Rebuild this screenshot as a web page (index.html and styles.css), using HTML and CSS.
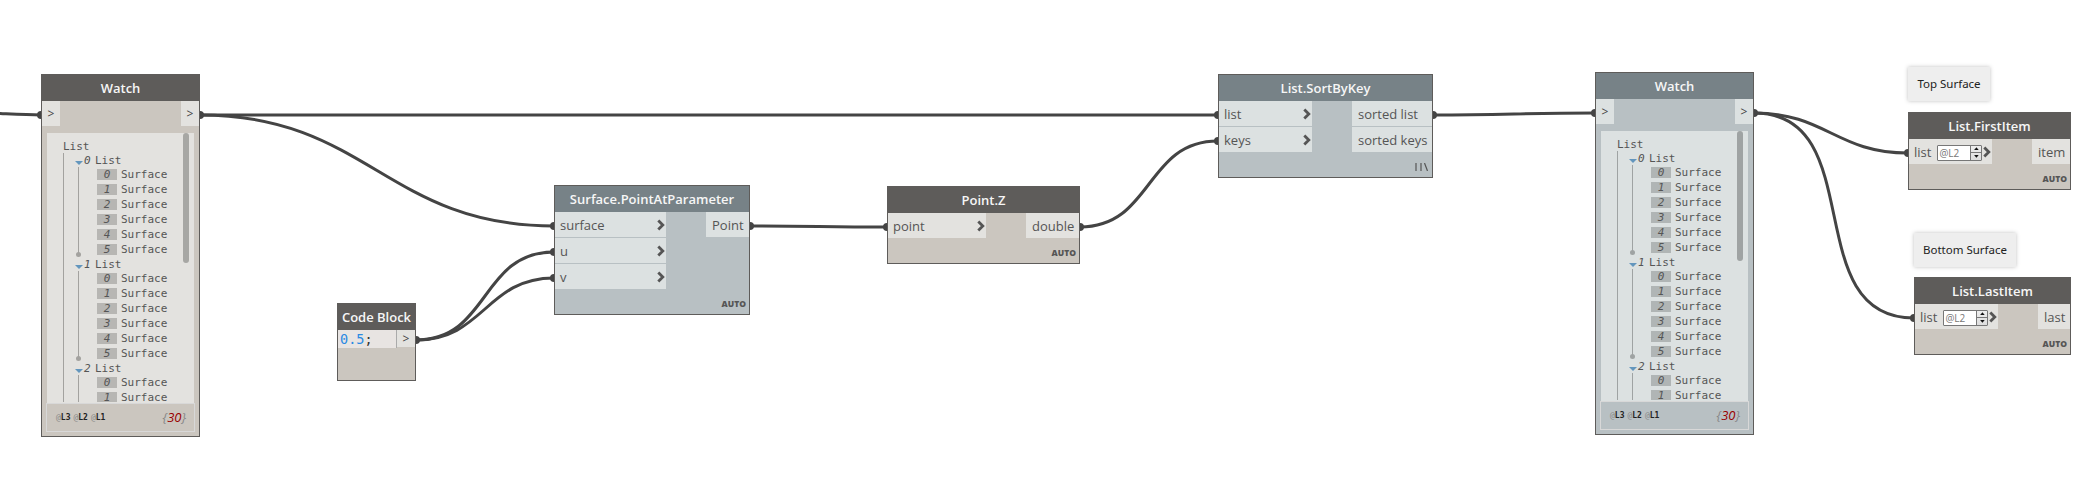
FILE: index.html
```html
<!DOCTYPE html>
<html lang="en">
<head>
<meta charset="utf-8">
<title>Node graph</title>
<link rel="stylesheet" href="styles.css">
</head>
<body>
<main class="canvas">
  <svg class="wires" width="2088" height="487" viewBox="0 0 2088 487">
    <path d="M-20 112.8C0 113.2 20 115 41 115"/>
    <path d="M200 115H1218"/>
    <path d="M200 115C367 115 387 226 554 226"/>
    <path d="M416 340C490 340 480 252 554 252"/>
    <path d="M416 340C484 340 486 278 554 278"/>
    <path d="M750 226C812 226 825 227 887 227"/>
    <path d="M1080 227C1153 227 1145 141 1218 141"/>
    <path d="M1433 115C1506 115 1522 113 1595 113"/>
    <path d="M1754 113C1826 113 1836 153 1908 153"/>
    <path d="M1754 113C1871 113 1797 318 1914 318"/>
    <g class="dots">
      <circle cx="41" cy="115" r="4"/><circle cx="200" cy="115" r="4"/>
      <circle cx="554" cy="226" r="4"/><circle cx="554" cy="252" r="4"/><circle cx="554" cy="278" r="4"/>
      <circle cx="416" cy="340" r="4"/><circle cx="750" cy="226" r="4"/><circle cx="887" cy="227" r="4"/>
      <circle cx="1080" cy="227" r="4"/><circle cx="1218" cy="115" r="4"/><circle cx="1218" cy="141" r="4"/>
      <circle cx="1433" cy="115" r="4"/><circle cx="1595" cy="113" r="4"/><circle cx="1754" cy="113" r="4"/>
      <circle cx="1908" cy="153" r="4"/><circle cx="1914" cy="318" r="4"/>
    </g>
    <defs>
      <symbol id="chev" viewBox="0 0 8 12"><path d="M1.3 1.5L5.8 6L1.3 10.5"/></symbol>
    </defs>
  </svg>

  <section class="node watch watch-a">
    <h2 class="title">Watch</h2>
    <div class="ports"><span class="port mini">&gt;</span><span class="port mini">&gt;</span></div>
    <div class="panel">
      <div class="tree">
        <div class="root">List</div>
        <div class="branch">
          <div class="group">
            <div class="head"><i class="tri"></i><em>0</em>List</div>
            <div class="items">
              <div class="item"><em>0</em>Surface</div><div class="item"><em>1</em>Surface</div><div class="item"><em>2</em>Surface</div><div class="item"><em>3</em>Surface</div><div class="item"><em>4</em>Surface</div><div class="item"><em>5</em>Surface</div>
            </div>
          </div>
          <div class="group">
            <div class="head"><i class="tri"></i><em>1</em>List</div>
            <div class="items">
              <div class="item"><em>0</em>Surface</div><div class="item"><em>1</em>Surface</div><div class="item"><em>2</em>Surface</div><div class="item"><em>3</em>Surface</div><div class="item"><em>4</em>Surface</div><div class="item"><em>5</em>Surface</div>
            </div>
          </div>
          <div class="group">
            <div class="head"><i class="tri"></i><em>2</em>List</div>
            <div class="items open">
              <div class="item"><em>0</em>Surface</div><div class="item"><em>1</em>Surface</div>
            </div>
          </div>
        </div>
      </div>
      <div class="scroll"></div>
    </div>
    <div class="summary">
      <span class="levels"><span><i>@</i>L3</span><span><i>@</i>L2</span><span><i>@</i>L1</span></span>
      <span class="count">{<b>30</b>}</span>
    </div>
  </section>

  <section class="node code-block">
    <h2 class="title">Code Block</h2>
    <div class="code-row"><code class="code"><span class="num">0.5</span>;</code><span class="port mini">&gt;</span></div>
  </section>

  <section class="node active point-at">
    <h2 class="title">Surface.PointAtParameter</h2>
    <div class="ports">
      <div class="col ins">
        <span class="port">surface<svg class="chev"><use href="#chev"/></svg></span>
        <span class="port">u<svg class="chev"><use href="#chev"/></svg></span>
        <span class="port">v<svg class="chev"><use href="#chev"/></svg></span>
      </div>
      <div class="col outs"><span class="port">Point</span></div>
    </div>
    <div class="lacing">AUTO</div>
  </section>

  <section class="node point-z">
    <h2 class="title">Point.Z</h2>
    <div class="ports">
      <div class="col ins"><span class="port">point<svg class="chev"><use href="#chev"/></svg></span></div>
      <div class="col outs"><span class="port">double</span></div>
    </div>
    <div class="lacing">AUTO</div>
  </section>

  <section class="node active sort">
    <h2 class="title">List.SortByKey</h2>
    <div class="ports">
      <div class="col ins">
        <span class="port">list<svg class="chev"><use href="#chev"/></svg></span>
        <span class="port">keys<svg class="chev"><use href="#chev"/></svg></span>
      </div>
      <div class="col outs"><span class="port">sorted list</span><span class="port">sorted keys</span></div>
    </div>
    <div class="lacing"><svg class="longest" viewBox="0 0 13 8"><path d="M1 0V8M6 0V8M9.5 0L12.5 8"/></svg></div>
  </section>

  <section class="node active watch watch-b">
    <h2 class="title">Watch</h2>
    <div class="ports"><span class="port mini">&gt;</span><span class="port mini">&gt;</span></div>
    <div class="panel">
      <div class="tree">
        <div class="root">List</div>
        <div class="branch">
          <div class="group">
            <div class="head"><i class="tri"></i><em>0</em>List</div>
            <div class="items">
              <div class="item"><em>0</em>Surface</div><div class="item"><em>1</em>Surface</div><div class="item"><em>2</em>Surface</div><div class="item"><em>3</em>Surface</div><div class="item"><em>4</em>Surface</div><div class="item"><em>5</em>Surface</div>
            </div>
          </div>
          <div class="group">
            <div class="head"><i class="tri"></i><em>1</em>List</div>
            <div class="items">
              <div class="item"><em>0</em>Surface</div><div class="item"><em>1</em>Surface</div><div class="item"><em>2</em>Surface</div><div class="item"><em>3</em>Surface</div><div class="item"><em>4</em>Surface</div><div class="item"><em>5</em>Surface</div>
            </div>
          </div>
          <div class="group">
            <div class="head"><i class="tri"></i><em>2</em>List</div>
            <div class="items open">
              <div class="item"><em>0</em>Surface</div><div class="item"><em>1</em>Surface</div>
            </div>
          </div>
        </div>
      </div>
      <div class="scroll"></div>
    </div>
    <div class="summary">
      <span class="levels"><span><i>@</i>L3</span><span><i>@</i>L2</span><span><i>@</i>L1</span></span>
      <span class="count">{<b>30</b>}</span>
    </div>
  </section>

  <div class="note note-top">Top Surface</div>
  <section class="node first-item">
    <h2 class="title">List.FirstItem</h2>
    <div class="ports">
      <div class="col ins"><span class="port">list<span class="level"><span class="value">@L2</span><span class="spin"><i class="up"></i><i class="down"></i></span></span><svg class="chev"><use href="#chev"/></svg></span></div>
      <div class="col outs"><span class="port">item</span></div>
    </div>
    <div class="lacing">AUTO</div>
  </section>

  <div class="note note-bottom">Bottom Surface</div>
  <section class="node last-item">
    <h2 class="title">List.LastItem</h2>
    <div class="ports">
      <div class="col ins"><span class="port">list<span class="level"><span class="value">@L2</span><span class="spin"><i class="up"></i><i class="down"></i></span></span><svg class="chev"><use href="#chev"/></svg></span></div>
      <div class="col outs"><span class="port">last</span></div>
    </div>
    <div class="lacing">AUTO</div>
  </section>
</main>
</body>
</html>
```
FILE: styles.css
```css
* { box-sizing: border-box; }
body { margin: 0; background: #fff; font-family: "Open Sans", sans-serif; }
.canvas { position: relative; width: 2088px; height: 487px; overflow: hidden; }
.wires { position: absolute; left: 0; top: 0; fill: none; stroke: #444; stroke-width: 3; }
.dots { fill: #444; stroke: none; }

/* nodes */
.node {
  --head: #5e5c5a; --body: #cbc6bf; --port: #e3e2df; --ink: #555; --idx: #b7b6b3; --line: #a3a29f;
  position: absolute; display: flex; flex-direction: column;
  background: var(--body); border: 1px solid #5e5c5a; color: var(--ink);
}
.node.active { --head: #778287; --body: #b8c0c3; --port: #dce1e1; --idx: #b0b5b5; --line: #9fa3a3; }
.title {
  margin: 0; height: 26px; flex: none; background: var(--head); color: #f6f6f6;
  font-size: 13px; font-weight: 600; line-height: 27px; text-align: center; white-space: nowrap;
}
.ports { display: flex; justify-content: space-between; }
.col { display: flex; flex-direction: column; gap: 1px; }
.port {
  display: flex; align-items: center; height: 25px; padding: 2px 5px 0;
  background: var(--port); font-size: 13px; line-height: 23px; white-space: nowrap;
}
.outs .port { padding: 2px 5px 0 6px; }
.chev { width: 8px; height: 12px; margin: -1px -4px 0 auto; flex: none; fill: none; stroke: #555; stroke-width: 2.8; }
.port.mini { width: 18px; padding: 0; justify-content: center; font-size: 12px; color: #444; }
.lacing {
  display: flex; justify-content: flex-end; align-items: center; height: 25px; margin-top: auto;
  padding: 4px 3px 0 0; font-size: 8.5px; font-weight: 800; line-height: 12px;
}
.longest { width: 13px; height: 8px; margin-right: 1px; fill: none; stroke: #555; stroke-width: 1.2; }

.watch-a { left: 41px; top: 74px; width: 159px; height: 363px; }
.watch-b { left: 1595px; top: 72px; width: 159px; height: 363px; }
.code-block { left: 337px; top: 303px; width: 79px; height: 78px; }
.point-at { left: 554px; top: 185px; width: 196px; height: 130px; }
.point-z { left: 887px; top: 186px; width: 193px; height: 78px; }
.sort { left: 1218px; top: 74px; width: 215px; height: 104px; }
.first-item { left: 1908px; top: 112px; width: 163px; height: 78px; }
.last-item { left: 1914px; top: 277px; width: 157px; height: 78px; }
.point-at .ins { width: 111px; } .point-at .outs { width: 43px; }
.point-z .ins { width: 98px; } .point-z .outs { width: 53px; }
.sort .ins { width: 93px; } .sort .outs { width: 80px; }
.first-item .ins, .last-item .ins { width: 83px; }
.first-item .outs { width: 38px; } .last-item .outs { width: 32px; }

/* code block */
.code-row { display: flex; height: 18px; }
.code {
  width: 59px; padding-left: 2px; background: #e8e4e2; border-right: 1px solid #aaa;
  font: 13.5px/19px "DejaVu Sans Mono", monospace; color: #333;
}
.num { color: #2a8ae2; }
.code-row .port { height: 17px; }

/* watch list */
.panel { display: flex; height: 270px; margin: 7px 5px 0; background: var(--port); overflow: hidden; }
.tree { flex: 1; padding: 7px 0 0 16px; font: 11px/14px "DejaVu Sans Mono", monospace; }
.root { height: 13px; }
.branch { height: 249px; border-left: 1px solid var(--line); }
.group { padding-left: 11px; }
.head { display: flex; height: 14px; line-height: 15px; }
.head em { width: 12px; padding-left: 1px; }
.tri { width: 8px; height: 4px; margin-top: 8px; background: #6396bd; clip-path: polygon(0 0, 100% 0, 50% 100%); }
.items { position: relative; height: 90px; padding-left: 22px; }
.items::before { content: ""; position: absolute; left: 3px; top: 0; width: 1px; height: 86px; background: var(--line); }
.items::after { content: ""; position: absolute; left: 1px; top: 85px; width: 5px; height: 5px; border-radius: 50%; background: var(--line); }
.items.open { height: 27px; }
.open::before { height: 27px; }
.open::after { display: none; }
.item { display: flex; align-items: center; gap: 4px; height: 15px; }
.item em { width: 20px; height: 11px; line-height: 12px; text-align: center; background: var(--idx); }
.open .item:last-child { height: 12px; align-items: flex-end; line-height: 9px; }
.open .item:last-child em { height: 10px; }
.scroll { width: 6px; height: 130px; margin-right: 5px; border-radius: 3px; background: #a7a7a4; }
.active .scroll { background: #9fa3a3; }
.summary {
  display: flex; align-items: center; justify-content: space-between;
  height: 29px; margin: 0 4px; padding: 0 8px 0 9px; border: 1px solid #d8d8d8;
}
.levels { display: flex; gap: 3px; font: bold 8px/12px "DejaVu Sans Mono", monospace; color: #222; }
.levels i { font-style: normal; font-weight: 400; color: #888; }
.count { margin-top: -2px; font: italic 13px/14px "Open Sans", sans-serif; color: #888; }
.count b { font-weight: 400; color: #900; }

/* level picker */
.level { display: flex; width: 45px; height: 16px; margin-left: 6px; border: 1px solid #777; border-radius: 1px; background: #fff; }
.value { flex: 1; padding-left: 1px; font-size: 10px; line-height: 15px; color: #777; }
.spin { display: flex; flex-direction: column; width: 11px; border-left: 1px solid #777; background: linear-gradient(#eee, #ddd); }
.spin i { flex: 1; display: flex; align-items: center; justify-content: center; }
.up { border-bottom: 1px solid #777; }
.spin i::after { content: ""; width: 5px; height: 3px; background: #111; clip-path: polygon(0 0, 100% 0, 50% 100%); }
.spin .up::after { clip-path: polygon(50% 0, 100% 100%, 0 100%); }

/* notes */
.note {
  position: absolute; height: 34px; background: #eee; box-shadow: 0 0 4px rgba(0, 0, 0, .25);
  font: 11.5px/34px "Noto Sans", sans-serif; color: #222; text-align: center; white-space: nowrap;
}
.note-top { left: 1908px; top: 67px; width: 82px; }
.note-bottom { left: 1914px; top: 233px; width: 102px; }
```
